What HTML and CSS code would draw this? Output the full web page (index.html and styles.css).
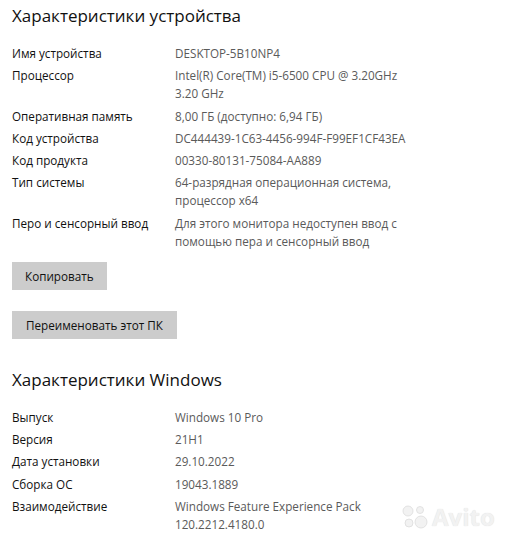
FILE: index.html
```html
<!DOCTYPE html>
<html lang="ru">
<head>
    <meta charset="UTF-8">
    <meta name="viewport" content="width=device-width, initial-scale=1.0">
    <title>Характеристики устройства</title>
    <link rel="stylesheet" href="styles.css">
</head>
<body>
    <div class="page">
        <h2 class="section-title">Характеристики устройства</h2>
        <dl class="specs">
            <div class="row"><dt>Имя устройства</dt><dd>DESKTOP-5B10NP4</dd></div>
            <div class="row"><dt>Процессор</dt><dd>Intel(R) Core(TM) i5-6500 CPU @ 3.20GHz<br>3.20 GHz</dd></div>
            <div class="row"><dt>Оперативная память</dt><dd>8,00 ГБ (доступно: 6,94 ГБ)</dd></div>
            <div class="row"><dt>Код устройства</dt><dd>DC444439-1C63-4456-994F-F99EF1CF43EA</dd></div>
            <div class="row"><dt>Код продукта</dt><dd>00330-80131-75084-AA889</dd></div>
            <div class="row"><dt>Тип системы</dt><dd>64-разрядная операционная система,<br>процессор x64</dd></div>
            <div class="row"><dt>Перо и сенсорный ввод</dt><dd>Для этого монитора недоступен ввод с<br>помощью пера и сенсорный ввод</dd></div>
        </dl>

        <button class="btn btn-copy">Копировать</button>
        <button class="btn btn-rename">Переименовать этот ПК</button>

        <h2 class="section-title windows-title">Характеристики Windows</h2>
        <dl class="specs">
            <div class="row"><dt>Выпуск</dt><dd>Windows 10 Pro</dd></div>
            <div class="row"><dt>Версия</dt><dd>21H1</dd></div>
            <div class="row"><dt>Дата установки</dt><dd>29.10.2022</dd></div>
            <div class="row"><dt>Сборка ОС</dt><dd>19043.1889</dd></div>
            <div class="row"><dt>Взаимодействие</dt><dd>Windows Feature Experience Pack<br>120.2212.4180.0</dd></div>
        </dl>
    </div>

    <!-- водяной знак -->
    <div class="watermark">
        <svg width="30" height="26" viewBox="0 0 30 26">
            <circle cx="8" cy="7" r="5"/>
            <circle cx="20" cy="6" r="3.5"/>
            <circle cx="9" cy="19" r="4"/>
            <circle cx="21" cy="18" r="6"/>
        </svg>
        <span>Avito</span>
    </div>
</body>
</html>
```

FILE: styles.css
```css
body {
    margin: 0;
    background: #fff;
    font-family: "Open Sans", "Noto Sans", sans-serif;
    color: #111;
}
.page {
    padding: 4px 12px 0;
    width: 484px;
}
.section-title {
    font-size: 17px;
    font-weight: 400;
    line-height: 24px;
    margin: 0 0 16px;
    color: #111;
}
.windows-title {
    margin-top: 29px;
}
.specs {
    margin: 0;
    font-size: 11.7px;
    line-height: 18px;
}
.row {
    display: grid;
    grid-template-columns: 163px 1fr;
    margin-bottom: 4.3px;
}
.row dt {
    color: #111;
}
.row dd {
    margin: 0;
    color: #5a5a5a;
}
.btn {
    display: block;
    font-family: inherit;
    font-size: 11.7px;
    color: #111;
    background: #cccccc;
    border: none;
    border-radius: 0;
    height: 28px;
    padding: 0 14px;
}
.btn-copy {
    margin-top: 12px;
    padding: 0 13px;
}
.btn-rename {
    margin-top: 21px;
}
.watermark {
    position: absolute;
    left: 400px;
    top: 500px;
    display: flex;
    align-items: center;
    gap: 2px;
    color: #f2f2f2;
    font-family: "Open Sans", sans-serif;
    font-weight: 700;
    font-size: 24px;
    text-shadow: 0 0 1px #d8d8d8;
}
.watermark svg {
    fill: #f2f2f2;
    stroke: #dcdcdc;
    stroke-width: 0.8;
}
```
